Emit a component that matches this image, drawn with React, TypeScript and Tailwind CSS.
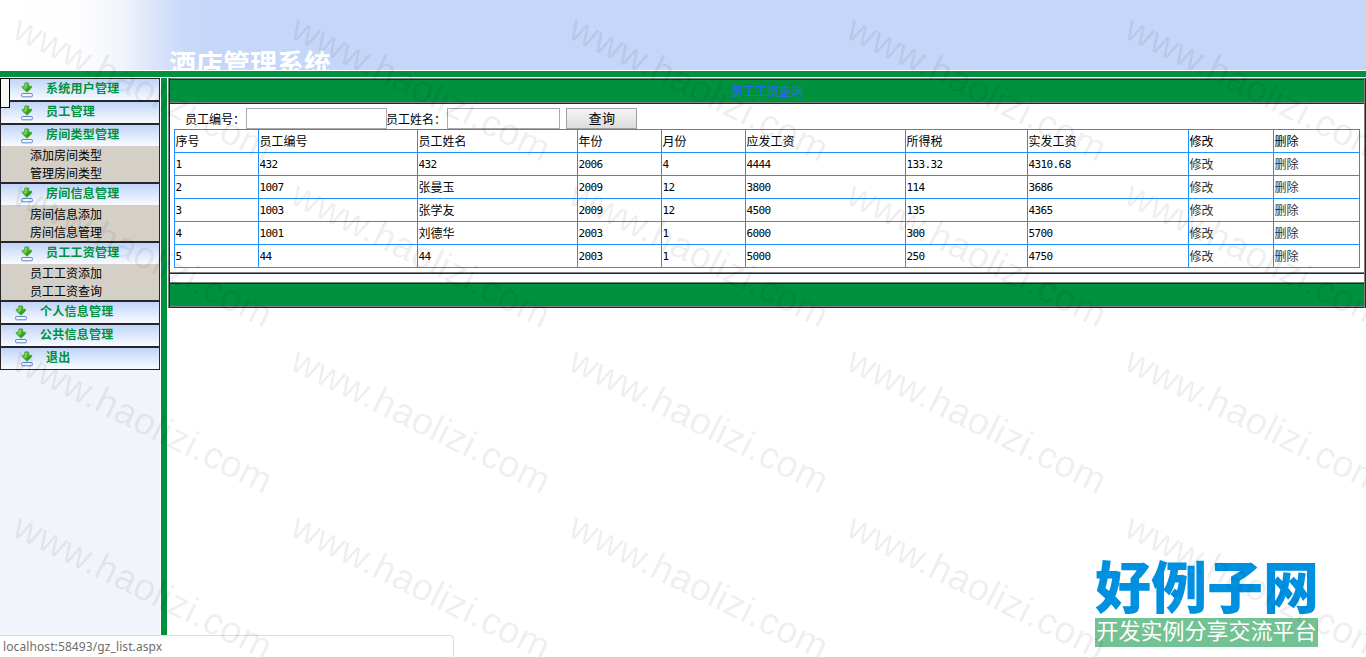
const navItems: { title: string; narrow?: boolean; children?: string[] }[] = [
  { title: '系统用户管理' },
  { title: '员工管理' },
  { title: '房间类型管理', children: ['添加房间类型', '管理房间类型'] },
  { title: '房间信息管理', children: ['房间信息添加', '房间信息管理'] },
  { title: '员工工资管理', children: ['员工工资添加', '员工工资查询'] },
  { title: '个人信息管理', narrow: true },
  { title: '公共信息管理', narrow: true },
  { title: '退出' },
];

const headings = ['序号', '员工编号', '员工姓名', '年份', '月份', '应发工资', '所得税', '实发工资', '修改', '删除'];

const rows = [
  ['1', '432', '432', '2006', '4', '4444', '133.32', '4310.68'],
  ['2', '1007', '张曼玉', '2009', '12', '3800', '114', '3686'],
  ['3', '1003', '张学友', '2009', '12', '4500', '135', '4365'],
  ['4', '1001', '刘德华', '2003', '1', '6000', '300', '5700'],
  ['5', '44', '44', '2003', '1', '5000', '250', '4750'],
];

const gridCols = 'grid grid-cols-[84px_159px_160px_84px_84px_160px_122px_161px_85px_86px]';

function DownloadIcon() {
  return (
    <svg width="12" height="16" viewBox="0 0 12 16" className="shrink-0">
      <defs>
        <linearGradient id="leaf" x1="0" y1="0" x2="1" y2="1">
          <stop offset="0" stopColor="#7fd65a" />
          <stop offset="0.5" stopColor="#3fae27" />
          <stop offset="1" stopColor="#1c8a12" />
        </linearGradient>
      </defs>
      <path d="M3.6 1.6 Q3.6 0.8 4.4 0.8 H7 Q7.8 0.8 7.8 1.6 V4.2 H10.8 L10.4 6 L6 10.2 L1.4 6 L1 4.2 H3.6 Z" fill="url(#leaf)" stroke="#3a9a2a" strokeWidth="0.6" />
      <path d="M5 2 V6 H3.2" fill="none" stroke="#a5e887" strokeWidth="0.9" />
      <rect x="0.7" y="11.5" width="10.6" height="3.3" rx="0.7" fill="#f4f8ff" stroke="#5b86cf" strokeWidth="1" />
    </svg>
  );
}

function Sidebar() {
  return (
    <nav className="h-full w-[160px] shrink-0 bg-[#f1f5fb]">
      {navItems.map((item) => (
        <div key={item.title} className="border border-[#28262b]">
          <div
            className={`flex h-[21px] items-center bg-linear-to-b from-[#c1d5f8] to-[#f8fbff] ${item.narrow ? 'pl-[14px]' : 'pl-[20px]'}`}
          >
            <span className="flex pt-[1px]"><DownloadIcon /></span>
            <span className="-mt-[2px] ml-[13px] text-[12px] leading-[18px] font-bold tracking-[0.25px] text-[#00913f]">{item.title}</span>
          </div>
          {item.children && (
            <div className="bg-[#d4d0c8] pl-[29px] text-[12px] leading-[20px]">
              {item.children.map((child) => (
                <div key={child} className="h-[18px]">{child}</div>
              ))}
            </div>
          )}
        </div>
      ))}
    </nav>
  );
}

function Rule() {
  return <div className="h-[2px] border-t border-[#808080] bg-[#28262b]" />;
}

function SalaryPanel() {
  return (
    <div className="flex border-l border-[#808080]">
      <div className="min-w-0 flex-1 border-l border-[#28262b]">
        <Rule />
        <div className="h-[22px] bg-[#00913f] text-center text-[12px] leading-[24px] text-[#3364ff]">员工工资查询</div>
        <Rule />
        <div className="h-[168px] pt-[4px] pl-[4px]">
          <form className="flex h-[21px] items-start pl-[11px] text-[12px] leading-[24px]">
            <label className="w-[61px] whitespace-nowrap">员工编号：</label>
            <input className="h-[21px] w-[141px] border border-[#a9a9a9] bg-white" />
            <label className="-ml-[1px] w-[61px] whitespace-nowrap">员工姓名：</label>
            <input className="h-[21px] w-[113px] border border-[#a9a9a9] bg-white" />
            <button type="button" className="ml-[6px] h-[21px] w-[71px] border border-[#a0a0a0] bg-linear-to-b from-[#f5f5f5] to-[#dcdcdc] pl-[1px] text-[13px] leading-[18px] tracking-[0.5px]">
              查询
            </button>
          </form>
          <div className="w-[1186px] border-t border-l border-[#1e90ff] text-[12px] leading-[24px]">
            <div className={gridCols}>
              {headings.map((h) => (
                <div key={h} className="h-[23px] border-r border-b border-[#1e90ff] pl-[0.5px]">{h}</div>
              ))}
            </div>
            {rows.map((row) => (
              <div key={row[0]} className={gridCols}>
                {row.map((cell, i) => (
                  <div
                    key={i}
                    className={`h-[23px] border-r border-b border-[#1e90ff] pl-[0.5px] ${/^[\d.]+$/.test(cell) ? 'font-[DejaVu_Sans_Mono,monospace] text-[11px] tracking-[-0.6px]' : ''}`}
                  >
                    {cell}
                  </div>
                ))}
                <a className="h-[23px] border-r border-b border-[#1e90ff] pl-[0.5px] text-[#333]">修改</a>
                <a className="h-[23px] border-r border-b border-[#1e90ff] pl-[0.5px] text-[#333]">删除</a>
              </div>
            ))}
          </div>
        </div>
        <Rule />
        <div className="h-[8px]" />
        <Rule />
        <div className="h-[22px] bg-[#00913f]" />
        <Rule />
      </div>
      <div className="w-[2px] border-l border-[#808080] bg-[#28262b]" />
    </div>
  );
}

function Watermark() {
  return (
    <svg width="1366" height="657" className="pointer-events-none absolute inset-0">
      {[37, 203, 369, 535].map((y) =>
        [10.5, 288.5, 566.5, 844.5, 1122.5].map((x) => (
          <text
            key={`${x}-${y}`}
            transform={`translate(${x} ${y}) rotate(26.3)`}
            fontFamily="Liberation Sans, sans-serif"
            fontSize="37.5"
            textLength="283"
            fill="#000"
            fillOpacity="0.075"
          >
            www.haolizi.com
          </text>
        )),
      )}
    </svg>
  );
}

export default function App() {
  return (
    <div className="relative flex h-[657px] w-[1366px] flex-col overflow-hidden bg-white font-['Liberation_Sans','Noto_Sans_CJK_SC',sans-serif] text-black">
      <header className="h-[70px] overflow-hidden bg-[linear-gradient(to_right,#fff_0,#fefeff_75px,#f2f5fc_120px,#dce6f9_152px,#c8d9f8_185px,#c4d7f8_220px)] pt-[45px] pl-[169px]">
        <h1 className="text-[27px] leading-[40px] font-bold whitespace-nowrap text-white">酒店管理系统</h1>
      </header>
      <div className="mt-[1px] h-[6px] shrink-0 bg-[#00913f]" />
      <div className="mt-[1px] flex min-h-0 flex-1">
        <Sidebar />
        <div className="ml-[1px] w-[6px] shrink-0 bg-[#00913f]" />
        <main className="ml-[1px] min-w-0 flex-1">
          <SalaryPanel />
        </main>
      </div>

      <div className="absolute top-[78px] left-0 h-[30px] w-[10px] border border-black bg-[#f8f8f4]" />

      <div className="absolute top-[635px] left-0 h-[23px] w-[454px] rounded-tr-[4px] border-t border-r border-[#dcdcdc] bg-white pl-[3px] font-['Noto_Sans',sans-serif] text-[12px] leading-[22px] tracking-[0.1px] text-[#6e6e6e]">
        localhost:58493/gz_list.aspx
      </div>

      <div className="absolute top-[556px] left-[1095px] w-[223px]">
        <div className="flex h-[62px] items-center justify-between text-[56px] leading-[62px] font-black whitespace-nowrap text-[#0090e0]">
          <span className="pt-[4px]">好例子网</span>
        </div>
        <div className="h-[29px] bg-[#72c293] text-center text-[22px] leading-[28px] whitespace-nowrap text-white">开发实例分享交流平台</div>
      </div>

      <Watermark />
    </div>
  );
}
